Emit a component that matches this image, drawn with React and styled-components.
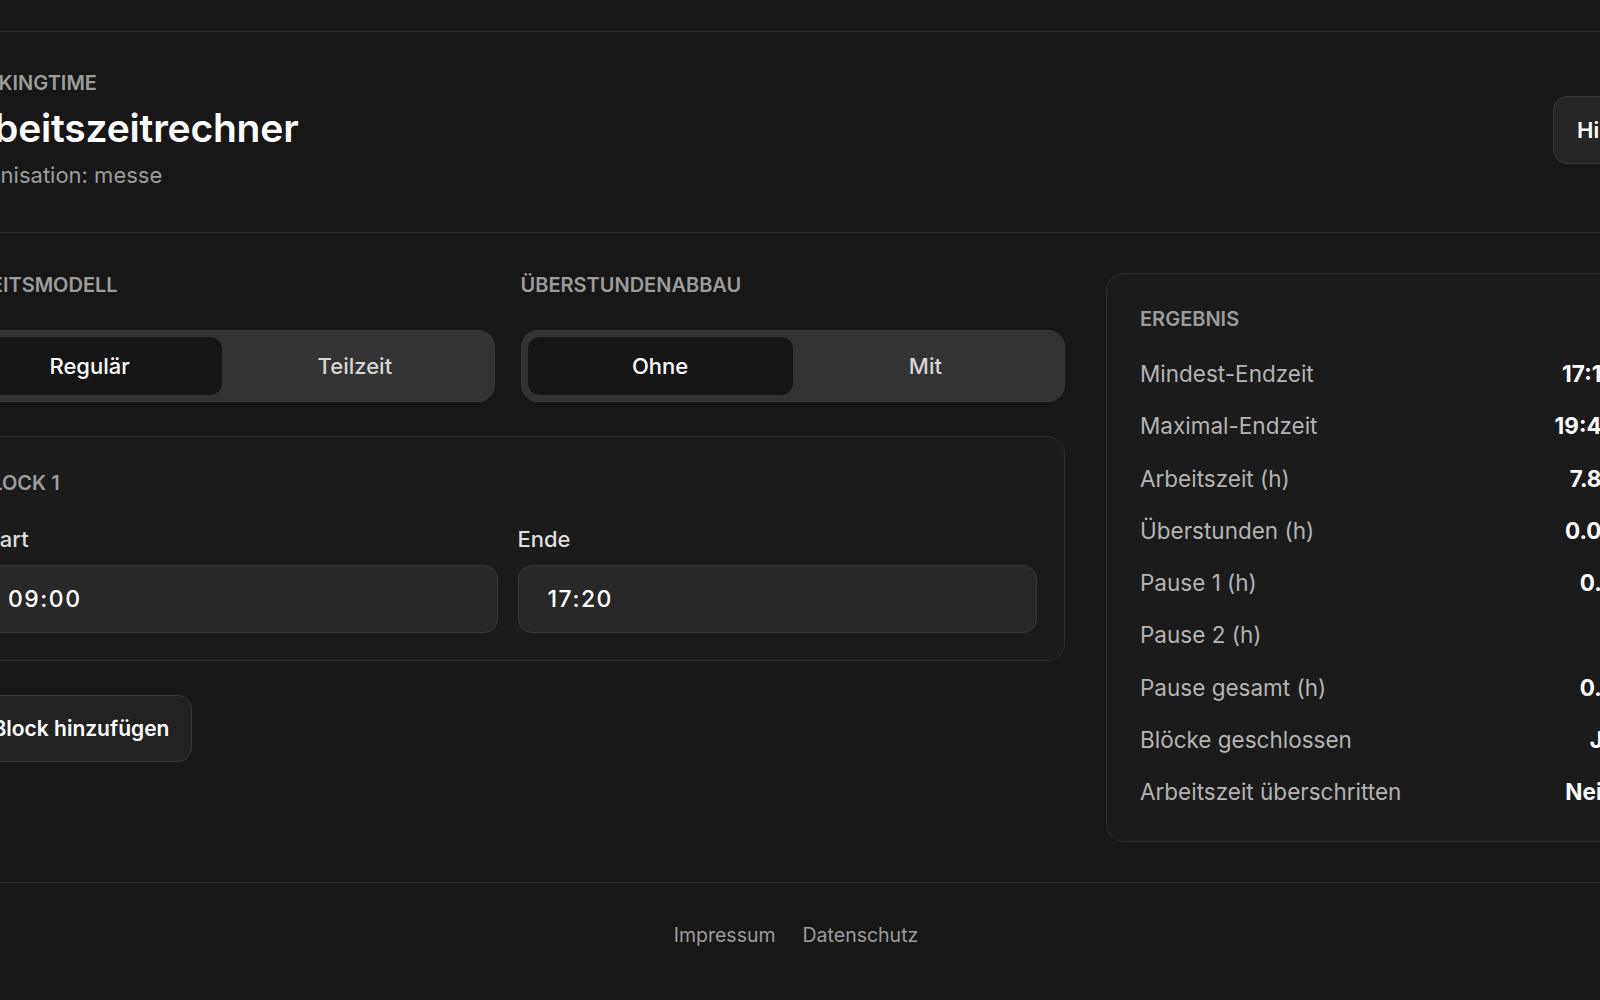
import React from "react";
import styled, { createGlobalStyle } from "styled-components";

const GlobalStyle = createGlobalStyle`
  html, body {
    margin: 0;
    padding: 0;
    background: #171717;
    color: #f2f2f2;
    font-family: Inter, "Noto Sans", Arial, sans-serif;
    overflow-x: hidden;
  }
  * { box-sizing: border-box; }
`;

const Page = styled.div`
  min-height: 1000px;
  display: flex;
  flex-direction: column;
`;

const TopBar = styled.div`
  height: 32px;
  border-bottom: 1px solid #2d2d2d;
`;

// content is wider than the window and stays centred
const Container = styled.div`
  width: 1700px;
  margin-left: calc((100vw - 1700px) / 2);
`;

const HeaderBand = styled.header`
  border-bottom: 1px solid #2d2d2d;
`;

const HeaderInner = styled(Container)`
  display: flex;
  align-items: center;
  justify-content: space-between;
  padding: 39px 0 43px;
`;

const TitleBlock = styled.div`
  display: flex;
  flex-direction: column;
`;

const Eyebrow = styled.div`
  font-size: 20px;
  line-height: 24px;
  font-weight: 600;
  color: #9c9c9c;
  text-transform: uppercase;
`;

const Title = styled.h1`
  margin: 10px 0 0;
  font-size: 39px;
  line-height: 46px;
  font-weight: 600;
  letter-spacing: -0.2px;
  color: #ffffff;
`;

const Subtitle = styled.div`
  margin-top: 11px;
  font-size: 22px;
  line-height: 27px;
  color: #9c9c9c;
`;

const GhostButton = styled.button`
  height: 68px;
  padding: 0 23px;
  border-radius: 14px;
  border: 1px solid #3a3a3a;
  background: #262626;
  color: #ffffff;
  font-family: inherit;
  font-size: 22px;
  font-weight: 600;
`;

const Main = styled(Container)`
  display: grid;
  grid-template-columns: 1fr 544px;
  column-gap: 41px;
  align-items: start;
  padding: 40px 0 40px;
`;

const LeftCol = styled.div`
  display: flex;
  flex-direction: column;
  align-items: flex-start;
`;

const OptionsRow = styled.div`
  width: 100%;
  display: grid;
  grid-template-columns: 1fr 1fr;
  gap: 26px;
`;

const OptionGroup = styled.div`
  display: flex;
  flex-direction: column;
  gap: 33px;
`;

const SectionLabel = styled.div`
  font-size: 20px;
  line-height: 24px;
  font-weight: 600;
  color: #9c9c9c;
  text-transform: uppercase;
`;

const Segmented = styled.div`
  height: 72px;
  padding: 6px;
  display: grid;
  grid-template-columns: 1fr 1fr;
  border-radius: 17px;
  background: #333333;
  border: 1px solid #3a3a3a;
`;

const Segment = styled.button`
  border: 0;
  border-radius: 12px;
  font-family: inherit;
  font-size: 22px;
  font-weight: 500;
  background: ${(p) => (p.$active ? "#151515" : "transparent")};
  color: ${(p) => (p.$active ? "#ffffff" : "#d6d6d6")};
`;

const BlockCard = styled.div`
  width: 100%;
  margin-top: 34px;
  padding: 34px 27px 27px;
  border-radius: 18px;
  border: 1px solid #2f2f2f;
  background: #1b1b1b;
`;

const FieldGrid = styled.div`
  margin-top: 31px;
  display: grid;
  grid-template-columns: 1fr 1fr;
  gap: 20px;
`;

const Field = styled.label`
  display: flex;
  flex-direction: column;
  gap: 13px;
`;

const FieldLabel = styled.span`
  font-size: 22px;
  line-height: 26px;
  font-weight: 500;
  color: #dedede;
`;

const TimeBox = styled.div`
  height: 68px;
  display: flex;
  align-items: center;
  padding: 0 29px;
  border-radius: 14px;
  border: 1px solid #3a3a3a;
  background: #282828;
  color: #ffffff;
  font-size: 23px;
  font-weight: 500;
  letter-spacing: 1.5px;
`;

const AddButton = styled(GhostButton)`
  margin-top: 34px;
  height: 67px;
  padding: 0 22px;
  background: #222222;
  font-size: 21px;
`;

const ResultCard = styled.section`
  padding: 33px 33px 35px;
  border-radius: 18px;
  border: 1px solid #2f2f2f;
  background: #1b1b1b;
`;

const ResultList = styled.div`
  margin-top: 29px;
  display: flex;
  flex-direction: column;
  gap: 24.3px;
`;

const ResultRow = styled.div`
  display: flex;
  justify-content: space-between;
  align-items: center;
  font-size: 22.5px;
  line-height: 28px;
`;

const ResultKey = styled.span`
  color: #b4b4b4;
`;

const ResultValue = styled.span`
  color: #ffffff;
  font-weight: 700;
`;

const FooterBand = styled.footer`
  border-top: 1px solid #2d2d2d;
`;

const FooterInner = styled(Container)`
  display: flex;
  justify-content: center;
  gap: 27px;
  padding: 40px 8px 52px 0;
`;

const FooterLink = styled.a`
  font-size: 19.5px;
  line-height: 24px;
  color: #9c9c9c;
  text-decoration: none;
`;

const results = [
  ["Mindest-Endzeit", "17:18"],
  ["Maximal-Endzeit", "19:45"],
  ["Arbeitszeit (h)", "7.83"],
  ["Überstunden (h)", "0.03"],
  ["Pause 1 (h)", "0.5"],
  ["Pause 2 (h)", "0"],
  ["Pause gesamt (h)", "0.5"],
  ["Blöcke geschlossen", "Ja"],
  ["Arbeitszeit überschritten", "Nein"],
];

export default function App() {
  return (
    <Page>
      <GlobalStyle />
      <TopBar />
      <HeaderBand>
        <HeaderInner>
          <TitleBlock>
            <Eyebrow>Workingtime</Eyebrow>
            <Title>Arbeitszeitrechner</Title>
            <Subtitle>Organisation: messe</Subtitle>
          </TitleBlock>
          <GhostButton>Hilfe</GhostButton>
        </HeaderInner>
      </HeaderBand>

      <Main>
        <LeftCol>
          <OptionsRow>
            <OptionGroup>
              <SectionLabel>Arbeitsmodell</SectionLabel>
              <Segmented>
                <Segment $active>Regulär</Segment>
                <Segment>Teilzeit</Segment>
              </Segmented>
            </OptionGroup>
            <OptionGroup>
              <SectionLabel>Überstundenabbau</SectionLabel>
              <Segmented>
                <Segment $active>Ohne</Segment>
                <Segment>Mit</Segment>
              </Segmented>
            </OptionGroup>
          </OptionsRow>

          <BlockCard>
            <SectionLabel>Block 1</SectionLabel>
            <FieldGrid>
              <Field>
                <FieldLabel>Start</FieldLabel>
                <TimeBox>09:00</TimeBox>
              </Field>
              <Field>
                <FieldLabel>Ende</FieldLabel>
                <TimeBox>17:20</TimeBox>
              </Field>
            </FieldGrid>
          </BlockCard>

          <AddButton>+ Block hinzufügen</AddButton>
        </LeftCol>

        <ResultCard>
          <SectionLabel>Ergebnis</SectionLabel>
          <ResultList>
            {results.map(([k, v]) => (
              <ResultRow key={k}>
                <ResultKey>{k}</ResultKey>
                <ResultValue>{v}</ResultValue>
              </ResultRow>
            ))}
          </ResultList>
        </ResultCard>
      </Main>

      <FooterBand>
        <FooterInner>
          <FooterLink href="#">Impressum</FooterLink>
          <FooterLink href="#">Datenschutz</FooterLink>
        </FooterInner>
      </FooterBand>
    </Page>
  );
}
